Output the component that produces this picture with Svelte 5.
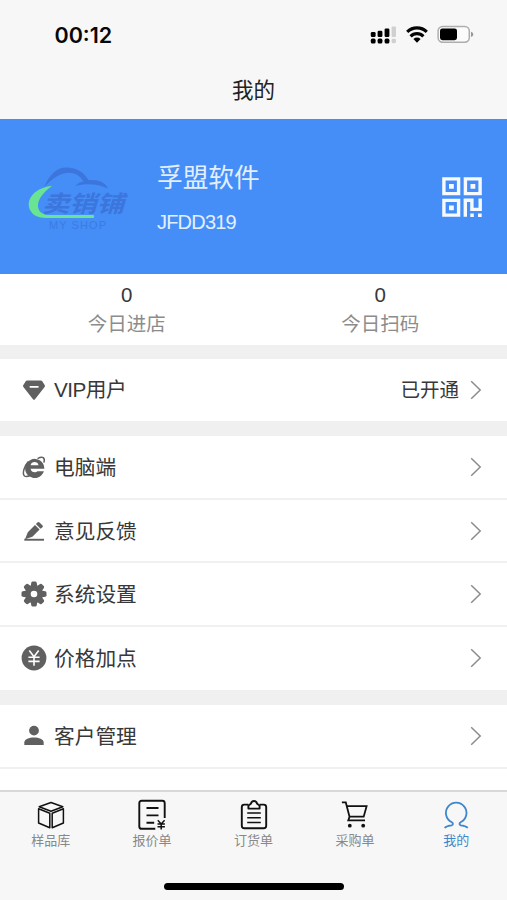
<script lang="ts">
interface MenuItem {
  icon: string;
  label: string;
  value?: string;
}

const stats = [
  { label: "今日进店", count: 0 },
  { label: "今日扫码", count: 0 },
];

const groups: MenuItem[][] = [
  [{ icon: "vip", label: "VIP用户", value: "已开通" }],
  [
    { icon: "browser", label: "电脑端" },
    { icon: "pen", label: "意见反馈" },
    { icon: "gear", label: "系统设置" },
    { icon: "yen", label: "价格加点" },
  ],
  [{ icon: "user", label: "客户管理" }],
];

const tabs = [
  { id: "samples", label: "样品库" },
  { id: "quotes", label: "报价单" },
  { id: "orders", label: "订货单" },
  { id: "purchase", label: "采购单" },
  { id: "mine", label: "我的" },
];

let activeTab = $state("mine");
</script>

<div class="page">
  <header class="header">
    <div class="status-bar">
      <span class="time">00:12</span>
      <div class="status-icons">
        <svg class="signal" width="27" height="18" viewBox="0 0 27 18">
          <rect x="0.8" y="6" width="4.8" height="5" rx="1.3" />
          <rect x="7.6" y="4.8" width="4.8" height="6.2" rx="1.3" />
          <rect x="14.6" y="2.5" width="4.8" height="8.5" rx="1.3" />
          <rect class="weak" x="21.6" y="0.5" width="4.4" height="10.5" rx="1" />
          <rect x="0.8" y="12.6" width="4.8" height="4.9" rx="1.6" />
          <rect x="7.6" y="12.6" width="4.8" height="4.9" rx="1.6" />
          <rect x="14.6" y="12.6" width="4.8" height="4.9" rx="1.6" />
          <rect class="weak" x="21.6" y="12.8" width="4.4" height="4.4" rx="1.4" />
        </svg>
        <svg class="wifi" width="22" height="18" viewBox="0 0 22 18">
          <g fill="none" stroke="#050505" stroke-width="3.1">
            <path d="M1.2 5.9a14 14 0 0 1 19.6 0" />
            <path d="M4.6 10.3a9 9 0 0 1 12.800 0" />
          </g>
          <path d="M7.400 13a5.300 5.300 0 0 1 7.200 0L11 16.700z" />
        </svg>
        <svg class="battery" width="37" height="19" viewBox="0 0 37 19">
          <rect x="1.1" y="1.4" width="31.2" height="15.8" rx="4.6" fill="#fbfbfb" stroke="#aeaeae" stroke-width="1.5" />
          <rect x="3" y="3.4" width="17" height="11.8" rx="2.4" />
          <path d="M34 6.8c3 1 3 4.400 0 5.200z" fill="#999" />
        </svg>
      </div>
    </div>
    <h1 class="title">我的</h1>
  </header>

  <section class="profile">
    <svg class="logo" width="130" height="90" viewBox="0 0 130 90">
      <path d="M29 35.500C35 21 43 15.500 51 15.500C61 15.500 69 20 73.500 28.300C83 26.500 91 31 93 36.500C83 32 72 31 60 34C63 31 65.500 30 68.500 29.200C60 16.500 44 18 29 35.500z" fill="#3c75dc" />
      <text class="logo-name" x="27" y="60" textLength="82" lengthAdjust="spacingAndGlyphs">卖销铺</text>
      <text class="logo-sub" x="34" y="77" textLength="57">MY SHOP</text>
      <path d="M37 34C21 35 10 47 15 58Q19 66 31 66H78.500Q80 64.500 78.500 63H33C20 62 18 47 37 34z" fill="#69e493" />
    </svg>
    <div class="account">
      <div class="company">孚盟软件</div>
      <div class="code">JFDD319</div>
    </div>
    <svg class="qr" width="40" height="40" viewBox="0 0 40 40">
      <g fill="none" stroke="#f6faff" stroke-width="3.4">
        <path d="M1.900 1.900h14.700v14.700H1.900zM23.400 1.900h14.700v14.700H23.400zM1.900 23.400h14.700v14.700H1.900z" />
        <path d="M23.300 39.700V23.200h6.600v9.200h8.300V21.600" />
      </g>
      <path d="M7 7h4.800v4.800H7zM28.500 7h4.800v4.800h-4.800zM7 28.500h4.800v4.800H7zM28.300 36.400h3.500v3.500h-3.500zM36 36.400h3.700v3.500H36z" fill="#f6faff" />
    </svg>
  </section>

  <section class="stats">
    {#each stats as stat}
      <div class="stat">
        <span class="count">{stat.count}</span>
        <span class="stat-label">{stat.label}</span>
      </div>
    {/each}
  </section>

  <main class="menu">
    {#each groups as group}
      <div class="group">
        {#each group as item}
          <div class="row">
            <svg class="row-icon" width="26" height="26" viewBox="0 0 26 26">
              {#if item.icon === "vip"}
                <path d="M6.200 3.400h13.600q.8 0 1.300.6l2.700 4.200q.5.900-.2 1.700L14 22.200q-1 1.200-2 0L2.400 9.900q-.7-.8-.2-1.700l2.700-4.200q.5-.6 1.300-.6z" />
                <path d="M9.300 9.800h7.600" fill="none" stroke="#fff" stroke-width="1.700" stroke-linecap="round" />
              {:else if item.icon === "browser"}
                <path d="M22.900 17.200A9.600 9.600 0 1 1 23.300 14.700H9.600C10 18.600 14.800 19 16.400 17.200zM9.600 11.200H17.500C17 6.800 10.300 6.800 9.600 11.200z" fill-rule="evenodd" />
                <path d="M16.500 4.700C21.500 2 24.400 3.400 22.900 8.600M7.400 7.400C3.600 11.600.8 19.500 3.500 22C5 23 7.800 22.200 9.900 21" fill="none" stroke="#606060" stroke-width="1.500" />
              {:else if item.icon === "pen"}
                <path d="M4 21.200L6.800 14.200L14 7L18.600 11.600L11.400 18.800zM14.900 6.100L16.700 4.300Q17.600 3.600 18.500 4.400L21.600 7.400Q22.300 8.300 21.500 9.200L19.500 10.800z" />
                <path d="M3.300 20.800h19.700v1.900H3.300z" />
              {:else if item.icon === "gear"}
                <g fill="#606060">
                  {#each [0, 45, 90, 135, 180, 225, 270, 315] as angle}
                    <path d="M9.500 6L10.300 1.700Q10.600.5 11.700.5h2.600q1.100 0 1.400 1.200L16.500 6z" transform="rotate({angle} 13 13)" />
                  {/each}
                </g>
                <circle cx="13" cy="13" r="6.200" fill="none" stroke="#606060" stroke-width="5.800" />
              {:else if item.icon === "yen"}
                <circle cx="13" cy="13" r="12.400" />
                <path d="M8.300 5.600L13 11.800L17.700 5.600M13 11.800V20.800M7.400 12.300h11.200M7.400 16.400h11.200" fill="none" stroke="#fff" stroke-width="1.600" />
              {:else}
                <circle cx="13" cy="7.600" r="4.900" />
                <path d="M3.300 22V19.600C3.300 12.800 22.700 12.800 22.700 19.600v2.400z" />
              {/if}
            </svg>
            <span class="row-label">{item.label}</span>
            {#if item.value}
              <span class="row-value">{item.value}</span>
            {/if}
            <svg class="arrow" width="12" height="20" viewBox="0 0 12 20">
              <path d="M1.200 1.200L10.200 10L1.200 18.800" fill="none" stroke="#8c8c8c" stroke-width="1.500" />
            </svg>
          </div>
        {/each}
      </div>
    {/each}
  </main>

  <footer class="footer">
    <nav class="tabs">
      {#each tabs as tab}
        <button class="tab" class:active={activeTab === tab.id} onclick={() => (activeTab = tab.id)}>
          <svg width="32" height="32" viewBox="0 0 32 32" fill="none" stroke="currentColor">
            {#if tab.id === "samples"}
              <g stroke-width="1.500" stroke-linejoin="round">
                <path d="M4.200 7.800L16 3.500L27.800 7.800L16 12.300z" />
                <path d="M3.600 9.800L14.800 14.200V28.800L3.600 24zM28.400 9.800L17.200 14.200V28.800L28.400 24z" />
              </g>
            {:else if tab.id === "quotes"}
              <path d="M19.300 29.800H5.700Q3.300 29.800 3.300 27.400V4.200Q3.300 1.800 5.700 1.800H26.300Q28.700 1.800 28.700 4.200V19" stroke-width="1.900" />
              <path d="M10.500 9h12M10.500 16.400h12M10.500 23.700h7.700" stroke-width="1.900" />
              <path d="M21.800 21.200L25.200 25L28.600 21.200M25.200 25V30.600M21.500 25h7.400M21.500 27.800h7.400" stroke-width="1.500" />
            {:else if tab.id === "orders"}
              <path d="M10.300 5.600H6.300Q3.800 5.600 3.800 8.100V26.800Q3.800 29.300 6.300 29.300H25.700Q28.200 29.300 28.200 26.800V8.100Q28.200 5.600 25.700 5.600H21.700" stroke-width="1.900" />
              <path d="M10.400 9.600V6.500L12.900 4.800Q13.500 2 16 2Q18.500 2 19.100 4.800L21.600 6.500V9.600z" stroke-width="1.900" stroke-linejoin="round" />
              <path d="M9.200 14h13.600M9.200 18.700h13.600M9.200 23.500h13.600" stroke-width="1.600" />
            {:else if tab.id === "purchase"}
              <path d="M2.900 3.400H6.800L10.500 17.700H24.700L27.600 7.200H8M10.500 17.700L9.300 21.400H26" stroke-width="1.800" />
              <circle cx="10.800" cy="26.700" r="1.900" fill="currentColor" stroke="none" />
              <circle cx="24.200" cy="26.700" r="1.900" fill="currentColor" stroke="none" />
            {:else}
              <path d="M4.600 28.800C6.600 26.800 9 26.500 11.600 26.300Q14.200 25.300 11.800 23.300A10.300 10.300 0 1 1 20.600 23.300Q18.200 25.300 20.800 26.300C23.400 26.500 25.800 26.800 27.800 28.800" stroke-width="1.800" />
            {/if}
          </svg>
          <span>{tab.label}</span>
        </button>
      {/each}
    </nav>
    <div class="home-indicator"></div>
  </footer>
</div>

<style>
  :global(body) {
    margin: 0;
  }

  .page {
    display: flex;
    flex-direction: column;
    width: 507px;
    height: 900px;
    overflow: hidden;
    background: #fff;
    color: #383838;
    font-family: "Liberation Sans", "Noto Sans CJK SC", sans-serif;
  }

  .header {
    flex: none;
    height: 119px;
    background: #f7f7f7;
  }

  .status-bar {
    display: flex;
    align-items: center;
    justify-content: space-between;
    height: 69px;
    padding: 0 33px 0 54.500px;
    color: #080808;
  }

  .time {
    font-family: Inter, sans-serif;
    font-size: 21.500px;
    font-weight: 600;
    line-height: 30px;
  }

  .status-icons {
    display: flex;
    align-items: center;
  }

  .wifi {
    margin: 0 9px;
  }

  .weak {
    fill: #d0d0d0;
  }

  .title {
    margin: 0;
    font-size: 21.500px;
    font-weight: 400;
    line-height: 44px;
    text-align: center;
    color: #222;
  }

  .profile {
    flex: none;
    display: flex;
    align-items: center;
    box-sizing: border-box;
    height: 155px;
    padding: 0 25px 0 15px;
    background: #458ef7;
    color: #e3efff;
  }

  .logo-name {
    fill: #3c75dc;
    font-size: 23px;
    font-weight: 700;
    font-style: italic;
  }

  .logo-sub {
    fill: #3b7be2;
    font-size: 11px;
  }

  .account {
    flex: 1;
    margin-left: 12px;
  }

  .company {
    font-size: 25.700px;
    line-height: 40px;
  }

  .code {
    margin-top: 10px;
    font-size: 20px;
    line-height: 28px;
    letter-spacing: -0.800px;
  }

  .stats {
    flex: none;
    display: flex;
    height: 71px;
  }

  .stat {
    flex: 1;
    display: flex;
    flex-direction: column;
    align-items: center;
    padding-top: 8px;
  }

  .count {
    font-size: 20.500px;
    line-height: 26px;
  }

  .stat-label {
    font-size: 19.500px;
    line-height: 32px;
    color: #8c8c8c;
  }

  .menu {
    flex: 1;
    min-height: 0;
  }

  .group {
    border-top: 14px solid #f0f0f0;
  }

  .group + .group {
    border-top-width: 15px;
  }

  .row {
    display: flex;
    align-items: center;
    box-sizing: border-box;
    height: 63.700px;
    padding: 0 25px 0 21px;
    border-bottom: 2px solid #f0f0f0;
  }

  .group:first-child .row {
    height: 62px;
    border-bottom: none;
  }

  .group:nth-child(2) .row:last-child {
    height: 63px;
    border-bottom: 1px solid #fff;
  }

  .row-icon {
    fill: #606060;
  }

  .row-label {
    flex: 1;
    margin: 2px 0 0 7px;
    font-size: 20.700px;
    line-height: 30px;
  }

  .group:first-child .row-label {
    margin-top: 0;
    letter-spacing: -0.500px;
  }

  .row-value {
    margin-right: 11px;
    font-size: 19.500px;
    line-height: 30px;
  }

  .footer {
    flex: none;
    box-sizing: border-box;
    height: 110px;
    border-top: 2px solid #d8d8d8;
    background: #f7f7f7;
  }

  .tabs {
    display: flex;
    height: 91px;
  }

  .tab {
    flex: 1;
    display: flex;
    flex-direction: column;
    align-items: center;
    padding: 7px 0 0;
    border: none;
    background: none;
    color: #111;
    font-family: inherit;
    cursor: pointer;
  }

  .tab span {
    font-size: 13px;
    line-height: 20px;
    color: #888;
  }

  .tab.active,
  .tab.active span {
    color: #3f87cc;
  }

  .home-indicator {
    width: 180px;
    height: 7px;
    margin: 0 auto;
    border-radius: 4px;
    background: #000;
  }
</style>
